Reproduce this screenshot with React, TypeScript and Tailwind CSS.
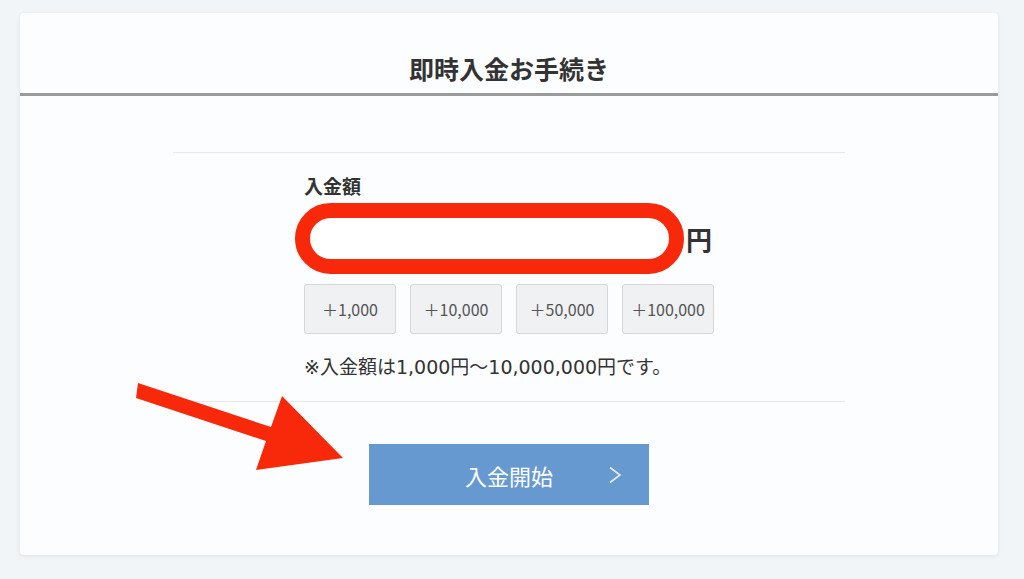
import React from "react";

const amounts = ["＋1,000", "＋10,000", "＋50,000", "＋100,000"];

export default function App() {
  return (
    <div
      className="relative w-[1024px] h-[579px] overflow-hidden bg-[#f2f5f8] text-[#333]"
      style={{ fontFamily: '"Noto Sans CJK JP", "Noto Sans", sans-serif' }}
    >
      <div className="pt-[13px] px-[20px]">
        <div className="h-[542px] w-[978px] rounded-[4px] bg-[#fbfdfe] shadow-[0_1px_4px_rgba(0,0,0,0.08)] flex flex-col">
          <div className="h-[80px] pt-[30px] flex items-center justify-center">
            <h1 className="text-[25px] leading-[36px] font-bold text-[#333]">即時入金お手続き</h1>
          </div>
          <div className="h-[3px] bg-[#9a9a9a]" />
          <div className="mx-auto w-[672px] mt-[56px]">
            <div className="h-px bg-[#e6e9ec]" />
            <div className="mx-auto w-[410px] flex flex-col">
              <div className="mt-[19px] text-[19px] leading-[28px] font-bold text-[#333]">入金額</div>
              <div className="mt-[3px] flex items-center">
                <div className="ml-[-9px] w-[389px] h-[71px] rounded-full border-[15px] border-[#f7290a] bg-white" />
                <span className="ml-[2px] text-[26px] leading-[36px] font-bold text-[#333]">円</span>
              </div>
              <div className="mt-[10px] flex gap-[14px]">
                {amounts.map((a) => (
                  <div
                    key={a}
                    className="w-[92px] h-[50px] rounded-[3px] border border-[#d5d8db] bg-[#eff1f3] flex items-center justify-center text-[16px] text-[#555]"
                  >
                    {a}
                  </div>
                ))}
              </div>
              <div
                className="mt-[20px] text-[19px] leading-[27px] text-[#333] whitespace-nowrap"
                style={{ fontFamily: '"DejaVu Sans", "Noto Sans CJK JP", sans-serif' }}
              >
                ※入金額は1,000円〜10,000,000円です。
              </div>
            </div>
            <div className="mt-[20px] h-px bg-[#e6e9ec]" />
            <div className="relative mx-auto mt-[42px] w-[280px] h-[61px] bg-[#6699cf] flex items-center justify-center">
              <span className="text-[22px] leading-[30px] text-white">入金開始</span>
              <svg className="absolute right-[27px] top-[22px]" width="14" height="18" viewBox="0 0 14 18">
                <polyline points="2,1.5 12,9 2,16.5" fill="none" stroke="#e4eef8" strokeWidth="1.6" />
              </svg>
            </div>
          </div>
        </div>
      </div>
      <svg className="absolute left-0 top-0 pointer-events-none" width="1024" height="579" viewBox="0 0 1024 579">
        <polygon
          points="138,383 271,427 282,396 343,458 256,470 266,441 136,398"
          fill="#f7290a"
        />
      </svg>
    </div>
  );
}
